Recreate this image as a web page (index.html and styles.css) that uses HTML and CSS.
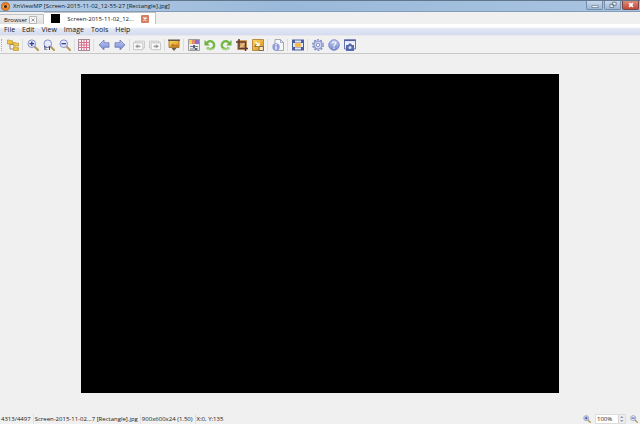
FILE: index.html
```html
<!DOCTYPE html>
<html lang="en">
<head>
<meta charset="utf-8">
<title>XnViewMP</title>
<link rel="stylesheet" href="styles.css">
</head>
<body>
<svg class="defs" aria-hidden="true">
  <defs>
    <linearGradient id="blue" x2="0" y2="1"><stop stop-color="#c5cff6"/><stop offset="1" stop-color="#7585cf"/></linearGradient>
    <linearGradient id="gold" x2="1" y2="1"><stop stop-color="#fbdc62"/><stop offset="1" stop-color="#dc8a1b"/></linearGradient>
    <symbol id="lens" viewBox="0 0 12 12"><path d="M7 7l4 4" stroke="#b39a55" stroke-width="2" stroke-linecap="round"/><circle cx="4.8" cy="4.7" r="3.8" fill="#e4e9fb" stroke="#8790c3"/></symbol>
    <symbol id="zoomin" viewBox="0 0 12 12"><use href="#lens"/><path d="M2.500 4.700h4.600M4.800 2.400V7" stroke="#333d83" stroke-width="1.300"/></symbol>
    <symbol id="zoomout" viewBox="0 0 12 12"><use href="#lens"/><path d="M2.500 4.700h4.600" stroke="#333d83" stroke-width="1.300"/></symbol>
    <symbol id="arrow" viewBox="0 0 12 12"><path d="M1 6l5-5v2.700h5v4.600H6V11z" fill="url(#blue)" stroke="#6c7abd" stroke-width=".8"/></symbol>
    <symbol id="page" viewBox="0 0 14 12"><path d="M2.500 1.500h11v8h-11z" fill="#f3f3f4" stroke="#c3c3c7"/><path d="M.5 3.500h11v8H.5z" fill="#fafafa" stroke="#bdbdc1"/><path d="M2.500 7.500l3-2.500v1.500h3v2h-3V10z" fill="#999"/></symbol>
    <symbol id="rotate" viewBox="0 0 12 12"><path d="M2.700 4.200A4 4 0 1 1 3 8.500" fill="none" stroke="#74b84a" stroke-width="2.400"/><path d="M.5 1v5.500h5.300z" fill="#6cb03e"/><path d="M2.500 8.500q3 3.500 6.500 1" fill="none" stroke="#b4d898" stroke-width="1.500"/></symbol>
  </defs>
</svg>
<div class="app">
  <header class="titlebar">
    <svg class="logo" viewBox="0 0 10 10"><circle cx="5" cy="5" r="4.500" fill="#e98324" stroke="#a85925" stroke-width=".8"/><path d="M1.500 5Q5 1 8.500 5 5 9 1.500 5z" fill="#f5b875"/><circle cx="5" cy="5" r="1.800" fill="#49251a"/></svg>
    <h1>XnViewMP [Screen-2015-11-02_12-55-27 [Rectangle].jpg]</h1>
    <div class="winbtns">
      <button aria-label="Minimize"><svg viewBox="0 0 8 6"><path d="M1.500 3.500h5v1.500h-5z" fill="#fff" stroke="#59687e" stroke-width=".5"/></svg></button>
      <button aria-label="Restore"><svg viewBox="0 0 8 6"><path d="M3.500.8h3v2.500h-3zM1.500 2.500h3v2.500h-3z" fill="#e9eff7" stroke="#6a788e" stroke-width=".7"/></svg></button>
      <button class="close" aria-label="Close"><svg viewBox="0 0 8 6"><path d="M2.500 1.500l3 3M5.500 1.500l-3 3" stroke="#fff" stroke-width="1.300"/></svg></button>
    </div>
  </header>
  <nav class="tabs" aria-label="Tabs">
    <div class="tab"><span>Browser</span><button class="tabclose" aria-label="Close Browser"><svg viewBox="0 0 8 8"><path d="M.5.500h7v7h-7z" fill="#f7f7f7" stroke="#b5b5b5"/><path d="M2.500 2.500l3 3M5.500 2.500l-3 3" stroke="#999"/></svg></button></div>
    <div class="tab active"><i class="thumb"></i><span>Screen-2015-11-02_12...</span><button class="tabclose" aria-label="Close image"><svg viewBox="0 0 8 8"><rect width="8" height="8" rx="1" fill="#d77e63"/><path d="M2.500 2.500l3 3M5.500 2.500l-3 3" stroke="#fff" stroke-width="1.200"/></svg></button></div>
  </nav>
  <nav class="menu" aria-label="Menu">
    <button>File</button><button>Edit</button><button>View</button><button>Image</button><button>Tools</button><button>Help</button>
  </nav>
  <div class="toolbar" role="toolbar">
    <div class="group first">
      <button aria-label="Browser"><svg viewBox="0 0 12 12"><path d="M3 4v6h5M3 5.500h5" fill="none" stroke="#87785a" stroke-width=".8"/><path d="M.5 1h2l.6.700h2.400V5h-5zM6.500 3.500h2l.6.700h2.400V7h-5zM6.500 8h2l.6.700h2.400v2.800h-5z" fill="#f2c63e" stroke="#bb9130" stroke-width=".7"/></svg></button>
    </div>
    <div class="group">
      <button aria-label="Zoom in"><svg><use href="#zoomin"/></svg></button>
      <button aria-label="Actual size"><svg viewBox="0 0 12 12"><use href="#lens"/><path d="M1 8l1-.7V11M5.500 8l1-.7V11M3.700 8v.8M3.700 10v.8" fill="none" stroke="#394175"/></svg></button>
      <button aria-label="Zoom out"><svg><use href="#zoomout"/></svg></button>
    </div>
    <div class="group tight">
      <button aria-label="Grid"><svg viewBox="0 0 12 12"><path d="M0 0h12v12H0z" fill="#a48a9b"/><path d="M1 1h10v10H1z" fill="#fff0f4"/><path d="M3.500 1v10M6 1v10M8.500 1v10M1 3.500h10M1 6h10M1 8.500h10" stroke="#d5708d"/></svg></button>
    </div>
    <div class="group">
      <button aria-label="Previous"><svg><use href="#arrow"/></svg></button>
      <button aria-label="Next"><svg class="flip"><use href="#arrow"/></svg></button>
    </div>
    <div class="group tight">
      <button aria-label="Previous page"><svg><use href="#page"/></svg></button>
      <button aria-label="Next page"><svg class="flip"><use href="#page"/></svg></button>
    </div>
    <div class="group tight">
      <button aria-label="Slideshow"><svg viewBox="0 0 12 12"><path d="M1 1.500h10v7H1z" fill="url(#gold)" stroke="#9b681d" stroke-width=".8"/><path d="M0 1.200h12" stroke="#5b5545" stroke-width="1.400"/><path d="M2 7.500l3-3 2 2 2-1 1.500 2z" fill="#bb751c"/><path d="M3.500 9h5L6 12z" fill="#675c45"/></svg></button>
    </div>
    <div class="group">
      <button aria-label="Adjust"><svg viewBox="0 0 12 12"><path d="M.5.500h11v11H.5z" fill="#eee" stroke="#9b9ba1"/><path d="M1 1h3v4H1z" fill="#f2d451"/><path d="M4 1h3v4H4z" fill="#e48b72"/><path d="M7 1h4v4H7z" fill="#8a74bd"/><path d="M2 7.500h8M2 10h8" stroke="#777d8a"/><path d="M5 6h2v3H5zM7 9h2v2H7z" fill="#566278"/></svg></button>
      <button aria-label="Rotate left"><svg><use href="#rotate"/></svg></button>
      <button aria-label="Rotate right"><svg class="flip"><use href="#rotate"/></svg></button>
      <button aria-label="Crop"><svg viewBox="0 0 12 12"><path d="M1 1h10v10H1z" fill="#d7a365"/><path d="M0 3h9.500v9M3 0v9.500h9" fill="none" stroke="#5c3c32" stroke-width="1.500"/><path d="M4 8.500l4.500-4.500" stroke="#f3d7a6"/></svg></button>
      <button aria-label="Resize"><svg viewBox="0 0 12 12"><path d="M.5.500h11v11H.5z" fill="url(#gold)" stroke="#b98b43"/><path d="M2 8l2-3 2 3" fill="#9a6d2a"/><path d="M3.500 3l3.500 3.500M7 3.500v3H4" stroke="#fff" stroke-width="1.200" fill="none"/><path d="M7 7.500h4.500v4H7z" fill="#f7e4b0" stroke="#776a50"/></svg></button>
    </div>
    <div class="group">
      <button aria-label="Information"><svg viewBox="0 0 12 12"><path d="M3 .5h5.500l3 3v8H3z" fill="#f6f7fb" stroke="#a4a8b9"/><path d="M8.500.5v3h3" fill="none" stroke="#a4a8b9"/><circle cx="4" cy="8" r="3.700" fill="#929fda"/><path d="M4 7.300V10.500M4 5.200v1.200" stroke="#fff" stroke-width="1.300"/></svg></button>
    </div>
    <div class="group">
      <button aria-label="Full screen"><svg viewBox="0 0 12 12"><path d="M0 .5h12v11H0z" fill="#4b5f9e"/><path d="M3 1.500h6v2H3zM3 8.500h6v2H3zM1 4h2v4H1zM9 4h2v4H9z" fill="#dfe6fb"/><path d="M3 4h6v4H3z" fill="#f3b744" stroke="#e9d193" stroke-width=".6"/></svg></button>
    </div>
    <div class="group">
      <button aria-label="Settings"><svg viewBox="0 0 12 12"><circle cx="6" cy="6" r="5.200" fill="none" stroke="#7782bd" stroke-width="1.300" stroke-dasharray="2 1.270"/><circle cx="6" cy="6" r="4" fill="#ced6f3" stroke="#8793cc" stroke-width="1.200"/><circle cx="6" cy="6" r="1.700" fill="#f3f4fa" stroke="#7983b6" stroke-width=".8"/></svg></button>
      <button aria-label="Help"><svg viewBox="0 0 12 12"><circle cx="6" cy="6" r="5.300" fill="url(#blue)" stroke="#737eb6" stroke-width=".8"/><path d="M4.200 4.500Q4.500 3 6 3q2 0 1.800 1.600Q7.500 5.500 6 6.200V7.500M6 8.500v1.200" fill="none" stroke="#fff" stroke-width="1.200"/></svg></button>
      <button aria-label="Capture"><svg viewBox="0 0 12 12"><path d="M.5 1h11v9H.5z" fill="#eef1fb" stroke="#6776b0"/><path d="M0 1.300h12" stroke="#5361a0" stroke-width="1.600"/><path d="M2 6h2l1-1.500h2L8 6h2v6H2z" fill="#566bab"/><circle cx="6" cy="8.500" r="1.500" fill="#d4def5"/></svg></button>
    </div>
  </div>
  <main class="viewer"><div class="picture" role="img" aria-label="Image"></div></main>
  <footer class="status">
    <span>4313/4497</span><span>Screen-2015-11-02...7 [Rectangle].jpg</span><span>900x600x24 (1.50)</span><span>X:0, Y:135</span>
    <div class="zoom">
      <button aria-label="Zoom in"><svg><use href="#zoomin"/></svg></button>
      <div class="spin"><input type="text" value="100%" aria-label="Zoom level"><svg viewBox="0 0 7 8"><path d="M.5 0v8" stroke="#d3d3d3"/><path d="M2 3l1.800-2L5.600 3zM2 5l1.800 2L5.600 5z" fill="#8a98bc"/></svg></div>
      <button aria-label="Zoom out"><svg><use href="#zoomout"/></svg></button>
    </div>
  </footer>
</div>
</body>
</html>
```
FILE: styles.css
```css
* { box-sizing: border-box; }
body { margin: 0; background: #f0f0f0; color: #181818; font: 6px/10px "Open Sans", "Noto Sans", sans-serif; }
button, input { margin: 0; padding: 0; border: 0; background: none; font: inherit; color: inherit; }
svg { display: block; }
.defs { position: absolute; width: 0; height: 0; }
.app { display: flex; flex-direction: column; min-height: 100vh; }

.titlebar { display: flex; align-items: center; height: 12px; padding-left: 1px; gap: 3px; background: linear-gradient(90deg, #b5cce6, #9bb9da 45%, #a9c4e1); border-top: 1px solid #60758e; border-bottom: 1px solid #829cba; }
.titlebar h1 { flex: 1; margin: 0; font-size: inherit; font-weight: 400; color: #101a26; white-space: nowrap; }
.logo { width: 9px; height: 9px; }
.winbtns { display: flex; align-self: flex-start; gap: 1px; padding-right: 1px; }
.winbtns button { display: grid; place-items: center; width: 17px; height: 9px; border: 1px solid #758ca8; border-top: 0; border-radius: 0 0 2px 2px; background: linear-gradient(#c9d9ea, #9cb7d4); }
.winbtns .close { background: linear-gradient(#dd8b79, #c24a38); border-color: #7c4547; }
.winbtns svg { width: 10px; height: 8px; }

.tabs { display: flex; align-items: flex-end; height: 12px; background: #f0f0f0; }
.tab { display: flex; align-items: center; gap: 2px; height: 10px; padding: 0 6px 0 4px; background: linear-gradient(#f1f1f1, #dedede); border: 1px solid #c2c2c2; border-left: 0; border-bottom: 0; white-space: nowrap; }
.tab.active { height: 12px; gap: 7px; background: #fff; padding: 0 6px 0 7px; }
.tabclose, .tabclose svg { width: 8px; height: 8px; }
.thumb { width: 9px; height: 9px; background: #000; }

.menu { display: flex; align-items: center; gap: 7px; height: 12px; padding: 0 4px; font-size: 7px; background: linear-gradient(#fff 25%, #e1e6f4 45%, #d5dcef); border-bottom: 1px solid #e8e8ec; }

.toolbar { display: flex; align-items: center; height: 18px; border-bottom: 1px solid #c8c8c8; background: #f1f1f1; }
.group { display: flex; gap: 4px; padding: 0 3px 0 4px; border-left: 1px solid #dcdcdc; }
.group.first { padding-left: 5px; margin-left: 1px; border-left: 1px dotted #aaa; }
.group.tight { padding-left: 3px; }
.group button, .group svg { width: 12px; height: 12px; }
.flip { transform: scaleX(-1); }

.viewer { flex: 1; display: grid; place-items: center; background: #f0f0f0; }
.picture { width: 74.6%; aspect-ratio: 3 / 2; background: #000; }

.status { display: flex; align-items: center; height: 11px; padding-right: 2px; background: #f0f0f0; white-space: nowrap; }
.status > span { padding: 0 2px 0 1px; border-right: 1px solid #dfdfdf; }
.status > span:nth-child(4) { border-right: 0; }
.zoom { display: flex; align-items: center; gap: 4px; margin-left: auto; }
.zoom button, .zoom button svg { width: 8px; height: 8px; }
.spin { display: flex; align-items: center; width: 31px; height: 10px; background: #fff; border: 1px solid #ddd; }
.spin input { flex: 1; min-width: 0; height: 8px; padding-left: 1px; }
.spin svg { width: 7px; height: 8px; background: #eee; }
```
